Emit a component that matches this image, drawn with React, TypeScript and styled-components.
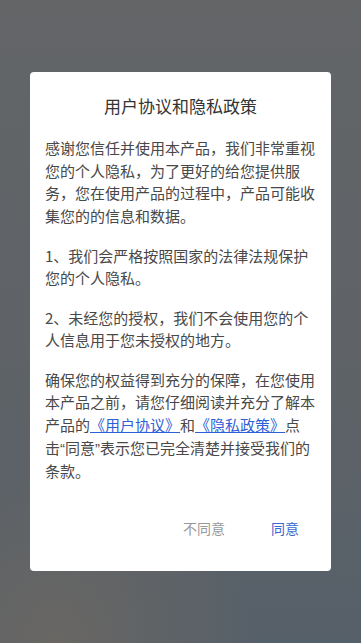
import { createGlobalStyle, styled } from "styled-components"

const GlobalStyle = createGlobalStyle`
  html, body {
    margin: 0;
    padding: 0;
  }
  body {
    font-family: "Noto Sans CJK SC", "Noto Sans", sans-serif;
  }
`

const App = () => {
  return (
    <Page>
      <GlobalStyle />
      <Dialog>
        <Title>用户协议和隐私政策</Title>
        <Content>
          <Para>
            感谢您信任并使用本产品，我们非常重视您的个人隐私，为了更好的给您提供服务，您在使用产品的过程中，产品可能收集您的的信息和数据。
          </Para>
          <Para>1、我们会严格按照国家的法律法规保护您的个人隐私。</Para>
          <Para>2、未经您的授权，我们不会使用您的个人信息用于您未授权的地方。</Para>
          <Para>
            确保您的权益得到充分的保障，在您使用本产品之前，请您仔细阅读并充分了解本产品的
            <Agreement href="#">《用户协议》</Agreement>和
            <Agreement href="#">《隐私政策》</Agreement>点击<Quote>“</Quote>同意<Quote>”</Quote>表示您已完全清楚并接受我们的条款。
          </Para>
        </Content>
        <Actions>
          <ActionButton>不同意</ActionButton>
          <ActionButton $primary>同意</ActionButton>
        </Actions>
      </Dialog>
    </Page>
  )
}

export default App

const Page = styled.div`
  height: 100vh;
  display: flex;
  align-items: center;
  justify-content: center;
  background:
    radial-gradient(ellipse 55% 30% at 15% 100%, rgba(110, 104, 98, 0.8), rgba(110, 104, 98, 0) 100%),
    linear-gradient(180deg, #636567 0%, #5f6367 55%, #566069 100%);
`

const Dialog = styled.div`
  width: 301px;
  background: #fff;
  border-radius: 4px;
  padding: 22px 0 21px;
  box-sizing: border-box;
`

const Title = styled.h2`
  margin: 0;
  font-size: 17px;
  line-height: 24px;
  font-weight: 400;
  color: #333;
  text-align: center;
`

const Content = styled.div`
  padding: 19px 15px 0;
`

const Para = styled.p`
  margin: 0 0 17px;
  font-size: 15px;
  line-height: 22.6px;
  color: #484848;

  &:last-child {
    margin-bottom: 0;
  }
`

const Quote = styled.span`
  font-family: "Liberation Sans", sans-serif;
`

const Agreement = styled.a`
  color: #2f5fd6;
  text-decoration: underline;
`

const Actions = styled.div`
  display: flex;
  justify-content: flex-end;
  gap: 14px;
  padding: 23px 16px 0;
`

const ActionButton = styled.button<{ $primary?: boolean }>`
  height: 44px;
  padding: 0 16px;
  border: none;
  background: none;
  font-family: inherit;
  font-size: 14px;
  color: ${(p) => (p.$primary ? "#3a68d0" : "#999")};
  cursor: pointer;
`
